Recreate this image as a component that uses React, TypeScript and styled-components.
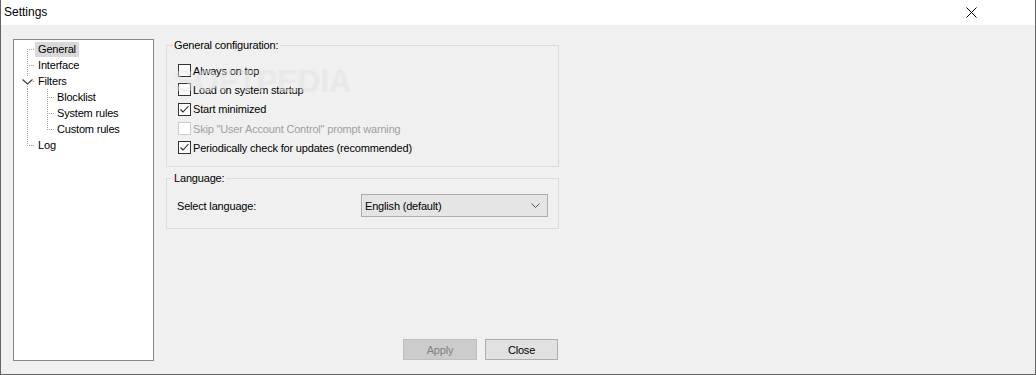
import React from 'react';
import styled, { createGlobalStyle } from 'styled-components';

const GlobalStyle = createGlobalStyle`
  html, body {
    margin: 0;
    padding: 0;
    background: #f0f0f0;
  }
  body {
    font-family: Tahoma, "Liberation Sans", Arial, sans-serif;
    font-size: 11px;
    letter-spacing: -0.18px;
    color: #000;
  }
`;

const Window = styled.div`
  width: 1036px;
  height: 375px;
  box-sizing: border-box;
  border: 1px solid #646464;
  border-top: none;
  display: flex;
  flex-direction: column;
  background: #f0f0f0;
  overflow: hidden;
`;

const TitleBar = styled.div`
  height: 25px;
  flex: none;
  background: #fff;
  display: flex;
  align-items: center;
  justify-content: space-between;
  padding: 0 0 0 3px;
`;

const Title = styled.span`
  font-size: 12px;
  letter-spacing: 0;
  color: #000;
  padding-bottom: 1px;
`;

const CloseGlyph = styled.div`
  width: 46px;
  height: 25px;
  margin-right: 41px;
  display: flex;
  align-items: center;
  justify-content: center;
`;

const Body = styled.div`
  flex: 1;
  display: flex;
  gap: 12px;
  padding: 14px 12px 13px 12px;
  min-height: 0;
`;

const TreeBox = styled.div`
  width: 141px;
  box-sizing: border-box;
  border: 1px solid #828790;
  background: #fff;
  padding-top: 1px;
`;

const TreeRow = styled.div`
  display: flex;
  align-items: center;
  height: 16px;
`;

const TreeLabel = styled.span<{ $selected?: boolean }>`
  display: inline-block;
  line-height: 15px;
  padding: 0 3px;
  background: ${(p) => (p.$selected ? '#d9d9d9' : 'transparent')};
  white-space: nowrap;
`;

const Gutter = styled.svg`
  flex: none;
  display: block;
`;

const RightColumn = styled.div`
  width: 393px;
  display: flex;
  flex-direction: column;
  position: relative;
`;

const GroupBox = styled.fieldset<{ $height: number; $gap?: number }>`
  margin: ${(p) => p.$gap ?? 0}px 0 0 0;
  padding: 0;
  border: 1px solid #dcdcdc;
  height: ${(p) => p.$height}px;
  box-sizing: border-box;
  min-width: 0;
`;

const Legend = styled.legend`
  margin-left: 6px;
  padding: 0 2px 0 1px;
  line-height: 13px;
`;

const CheckList = styled.div`
  display: flex;
  flex-direction: column;
  padding: 9px 0 0 11px;
`;

const CheckRow = styled.label<{ $disabled?: boolean }>`
  display: flex;
  align-items: center;
  height: 19.3px;
  color: ${(p) => (p.$disabled ? '#a0a0a0' : '#000')};
`;

const Box = styled.span<{ $disabled?: boolean }>`
  width: 13px;
  height: 13px;
  box-sizing: border-box;
  border: 1px solid ${(p) => (p.$disabled ? '#cccccc' : '#333333')};
  background: #fff;
  margin-right: 2px;
  display: flex;
  align-items: center;
  justify-content: center;
  flex: none;
`;

const LanguageRow = styled.div`
  display: flex;
  align-items: center;
  justify-content: space-between;
  margin-top: 9px;
  padding: 0 10px 0 10px;
`;

const Select = styled.div`
  width: 187px;
  height: 23px;
  box-sizing: border-box;
  border: 1px solid #adadad;
  background: #e5e5e5;
  display: flex;
  align-items: center;
  justify-content: space-between;
  padding: 0 7px 0 3px;
`;

const Spacer = styled.div`
  flex: 1;
`;

const ButtonBar = styled.div`
  display: flex;
  justify-content: flex-end;
  gap: 8px;
  padding-right: 1px;
  padding-bottom: 1px;
`;

const Button = styled.div<{ $disabled?: boolean; $width: number }>`
  width: ${(p) => p.$width}px;
  height: 21px;
  box-sizing: border-box;
  border: 1px solid ${(p) => (p.$disabled ? '#bfbfbf' : '#adadad')};
  background: ${(p) => (p.$disabled ? '#cccccc' : '#e1e1e1')};
  color: ${(p) => (p.$disabled ? '#838383' : '#000')};
  display: flex;
  align-items: center;
  justify-content: center;
`;

const Watermark = styled.div`
  position: absolute;
  left: 8px;
  top: 25px;
  font-family: "Liberation Sans", Arial, sans-serif;
  font-weight: bold;
  font-size: 31px;
  letter-spacing: 0;
  color: rgba(255, 255, 255, 0.3);
  text-shadow: 0 0 1px rgba(190, 190, 190, 0.3);
  pointer-events: none;
`;

type Vert = 'none' | 'full' | 'top' | 'bottom' | 'split';

function Connector({ vert, horiz = true, chevron = false, width = 21, x = 13 }: {
  vert: Vert; horiz?: boolean; chevron?: boolean; width?: number; x?: number;
}) {
  const stroke = '#a0a0a0';
  const lx = x + 0.5;
  return (
    <Gutter width={width} height={16} shapeRendering="crispEdges">
      {vert === 'full' && <line x1={lx} y1={0} x2={lx} y2={16} stroke={stroke} strokeDasharray="1 1" />}
      {vert === 'top' && <line x1={lx} y1={0} x2={lx} y2={9} stroke={stroke} strokeDasharray="1 1" />}
      {vert === 'bottom' && <line x1={lx} y1={8} x2={lx} y2={16} stroke={stroke} strokeDasharray="1 1" />}
      {vert === 'split' && (
        <>
          <line x1={lx} y1={0} x2={lx} y2={4} stroke={stroke} strokeDasharray="1 1" />
          <line x1={lx} y1={13} x2={lx} y2={16} stroke={stroke} strokeDasharray="1 1" />
        </>
      )}
      {horiz && !chevron && <line x1={x + 2} y1={8.5} x2={width} y2={8.5} stroke={stroke} strokeDasharray="1 1" />}
      {chevron && (
        <>
          <path d={`M${x - 4.5} 6.5 L${x + 0.5} 11 L${x + 5.5} 6.5`} fill="none" stroke="#404040" strokeWidth="1.2" shapeRendering="geometricPrecision" />
          <line x1={x + 6} y1={8.5} x2={width} y2={8.5} stroke={stroke} strokeDasharray="1 1" />
        </>
      )}
    </Gutter>
  );
}

function Check({ checked, disabled, label }: { checked?: boolean; disabled?: boolean; label: string }) {
  return (
    <CheckRow $disabled={disabled}>
      <Box $disabled={disabled}>
        {checked && (
          <svg width="11" height="11" viewBox="0 0 11 11">
            <path d="M1.5 5.5 L4 8 L9.5 2" fill="none" stroke="#222" strokeWidth="1.1" />
          </svg>
        )}
      </Box>
      {label}
    </CheckRow>
  );
}

export default function App() {
  return (
    <>
      <GlobalStyle />
      <Window>
        <TitleBar>
          <Title>Settings</Title>
          <CloseGlyph>
            <svg width="11" height="11" viewBox="0 0 11 11">
              <path d="M0.5 0.5 L10.5 10.5 M10.5 0.5 L0.5 10.5" stroke="#000" strokeWidth="1" />
            </svg>
          </CloseGlyph>
        </TitleBar>
        <Body>
          <TreeBox>
            <TreeRow>
              <Connector vert="bottom" />
              <TreeLabel $selected>General</TreeLabel>
            </TreeRow>
            <TreeRow>
              <Connector vert="full" />
              <TreeLabel>Interface</TreeLabel>
            </TreeRow>
            <TreeRow>
              <Connector vert="split" chevron />
              <TreeLabel>Filters</TreeLabel>
            </TreeRow>
            <TreeRow>
              <Connector vert="full" horiz={false} />
              <Connector vert="full" x={12} width={19} />
              <TreeLabel>Blocklist</TreeLabel>
            </TreeRow>
            <TreeRow>
              <Connector vert="full" horiz={false} />
              <Connector vert="full" x={12} width={19} />
              <TreeLabel>System rules</TreeLabel>
            </TreeRow>
            <TreeRow>
              <Connector vert="full" horiz={false} />
              <Connector vert="top" x={12} width={19} />
              <TreeLabel>Custom rules</TreeLabel>
            </TreeRow>
            <TreeRow>
              <Connector vert="top" />
              <TreeLabel>Log</TreeLabel>
            </TreeRow>
          </TreeBox>
          <RightColumn>
            <GroupBox $height={128}>
              <Legend>General configuration:</Legend>
              <CheckList>
                <Check label="Always on top" />
                <Check label="Load on system startup" />
                <Check checked label="Start minimized" />
                <Check disabled label={'Skip "User Account Control" prompt warning'} />
                <Check checked label="Periodically check for updates (recommended)" />
              </CheckList>
            </GroupBox>
            <GroupBox $height={57} $gap={5}>
              <Legend>Language:</Legend>
              <LanguageRow>
                <span>Select language:</span>
                <Select>
                  <span>English (default)</span>
                  <svg width="9" height="5" viewBox="0 0 9 5">
                    <path d="M0.5 0.5 L4.5 4.5 L8.5 0.5" fill="none" stroke="#555" strokeWidth="1" />
                  </svg>
                </Select>
              </LanguageRow>
            </GroupBox>
            <Spacer />
            <ButtonBar>
              <Button $disabled $width={74}>Apply</Button>
              <Button $width={73}>Close</Button>
            </ButtonBar>
            <Watermark>SOFTPEDIA</Watermark>
          </RightColumn>
        </Body>
      </Window>
    </>
  );
}
